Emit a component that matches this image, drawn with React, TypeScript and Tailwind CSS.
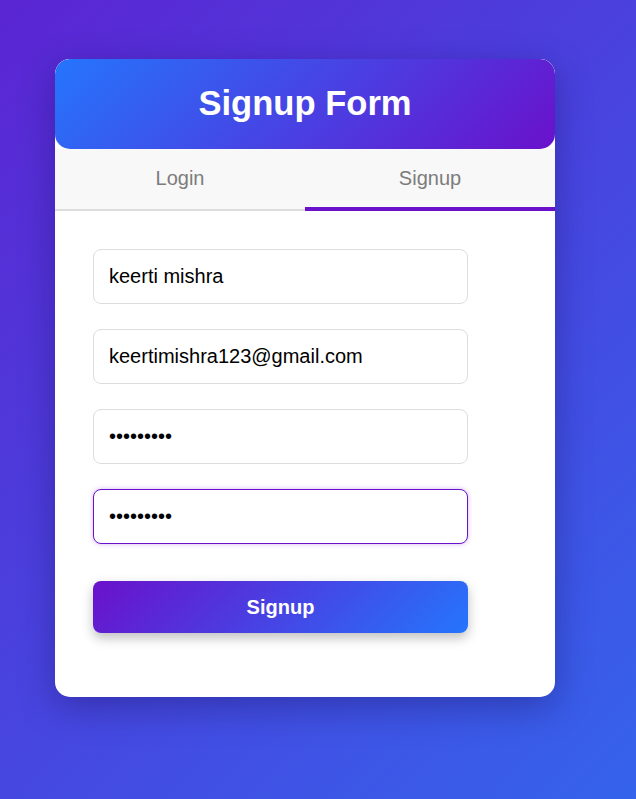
import React from 'react';

const fieldClass =
  "w-[375px] h-[55px] rounded-[8px] border border-[#ddd] bg-white px-[15px] text-[20px] text-black outline-none";

const App: React.FC = () => {
  return (
    <div className="min-h-[799px] w-full bg-[linear-gradient(135deg,#5b25d3,#3563eb)] pt-[59px] pl-[55px] font-['Liberation_Sans',Arial,sans-serif]">
      {/* Card */}
      <div className="w-[500px] h-[638px] rounded-[15px] bg-white overflow-hidden shadow-[0_10px_35px_rgba(20,10,80,0.35)]">
        {/* Header */}
        <div className="h-[90px] rounded-[15px] bg-[linear-gradient(135deg,#2575fc,#6a11cb)] flex items-center justify-center">
          <h1 className="text-white font-bold text-[34.6px]">Signup Form</h1>
        </div>

        {/* Tabs */}
        <div className="flex bg-[#f8f8f8]">
          <button className="w-1/2 h-[62px] text-[20px] text-[#7c7c7c] border-b-2 border-[#ddd] pb-[2px]">Login</button>
          <button className="w-1/2 h-[62px] text-[20px] text-[#7c7c7c] border-b-4 border-[#6a11cb]">Signup</button>
        </div>

        {/* Form */}
        <form className="px-[38px] pt-[38px] flex flex-col gap-[25px]">
          <input className={fieldClass} type="text" defaultValue="keerti mishra" readOnly />
          <input className={fieldClass} type="email" defaultValue="keertimishra123@gmail.com" readOnly />
          <input className={fieldClass} type="password" defaultValue="123456789" readOnly />
          <input
            className="w-[375px] h-[55px] rounded-[8px] border border-[#6a11cb] bg-white px-[15px] text-[20px] text-black outline-none shadow-[0_0_5px_rgba(106,17,203,0.3)]"
            type="password"
            defaultValue="123456789"
            readOnly
          />
          <button
            type="button"
            className="mt-[12px] w-[375px] h-[52px] rounded-[8px] bg-[linear-gradient(135deg,#6a11cb,#2575fc)] text-white font-bold text-[20px] shadow-[0_5px_12px_rgba(0,0,0,0.25)]"
          >
            Signup
          </button>
        </form>
      </div>
    </div>
  );
};

export default App;
